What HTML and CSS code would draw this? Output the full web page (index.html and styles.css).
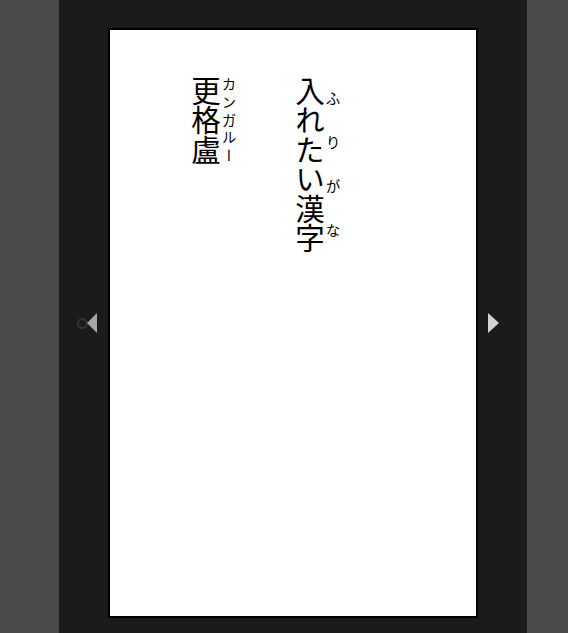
FILE: index.html
```html
<!DOCTYPE html>
<html lang="ja">
<head>
<meta charset="utf-8">
<link rel="stylesheet" href="styles.css">
</head>
<body>
<div class="viewer">
  <div class="side side-left">
    <span class="ring"></span>
    <span class="arrow arrow-left"></span>
  </div>
  <div class="page">
    <div class="text">
      <p class="line line-1"><ruby>入れたい漢字<rt>ふりがな</rt></ruby></p>
      <p class="line line-2"><ruby>更格盧<rt>カンガルー</rt></ruby></p>
    </div>
  </div>
  <div class="side side-right">
    <span class="arrow arrow-right"></span>
  </div>
</div>
</body>
</html>
```
FILE: styles.css
```css
html, body {
  margin: 0;
  padding: 0;
  height: 100%;
}
body {
  background: #4b4b4b;
  overflow: hidden;
}
.viewer {
  width: 468px;
  height: 633px;
  margin: 0 0 0 59px;
  background: #1b1b1b;
  display: flex;
  align-items: flex-start;
  padding-top: 28px;
  box-sizing: border-box;
}
.side {
  width: 49px;
  height: 590px;
  display: flex;
  align-items: center;
}
.side-left {
  justify-content: flex-end;
  padding-right: 11px;
  box-sizing: border-box;
}
.side-right {
  padding-left: 10px;
  box-sizing: border-box;
}
.ring {
  width: 7px;
  height: 7px;
  border: 2px solid #333;
  border-radius: 50%;
  margin-right: -1px;
}
.arrow {
  width: 0;
  height: 0;
  border-top: 10px solid transparent;
  border-bottom: 10px solid transparent;
}
.arrow-left {
  border-right: 10px solid #a6a6a6;
}
.arrow-right {
  border-left: 11px solid #d2d2d2;
}
.page {
  width: 370px;
  height: 590px;
  box-sizing: border-box;
  border: 2px solid #000;
  background: #fff;
}
.text {
  writing-mode: vertical-rl;
  font-family: "Noto Sans CJK JP", sans-serif;
  font-size: 29.5px;
  line-height: 30px;
  color: #000;
  width: 100%;
  height: 100%;
  box-sizing: border-box;
  padding-top: 46px;
  padding-right: 135px;
}
.line {
  margin: 0;
}
.line-2 {
  margin-right: 58px;
}
rt {
  font-size: 14.5px;
  line-height: 15px;
}
```
